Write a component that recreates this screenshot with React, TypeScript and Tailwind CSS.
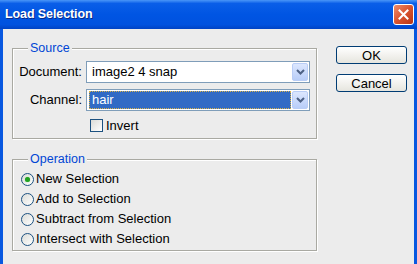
import React from 'react'

const font = { fontFamily: '"Liberation Sans", Arial, sans-serif' }

const Chevron = () => (
    <svg width="9" height="6" viewBox="0 0 9 6">
        <path d="M1 1 L4.5 4.5 L8 1" fill="none" stroke="#4d6185" strokeWidth="2" />
    </svg>
)

const DropButton = () => (
    <div className="w-[16px] h-[18px] rounded-[2px] border border-[#b9cdf6] bg-gradient-to-b from-[#dce7fe] to-[#b8cdf8] flex items-center justify-center">
        <Chevron />
    </div>
)

const Radio = ({ checked, label }: { checked?: boolean; label: string }) => (
    <div className="h-[20px] flex items-center">
        <div className="ml-[8px] w-[13px] h-[13px] rounded-full border border-[#1c5180] bg-gradient-to-br from-[#dcdcd7] to-white flex items-center justify-center">
            {checked && <div className="w-[5px] h-[5px] rounded-full bg-[#21a121] shadow-[0_0_1px_#6fd56f]" />}
        </div>
        <span className="ml-[2px] text-[13px] text-black">{label}</span>
    </div>
)

const groupBox = 'border border-[#a9a9a2] shadow-[1px_1px_0_#ffffff,inset_1px_1px_0_#ffffff] m-0 p-0 min-w-0'
const legend = 'ml-[15px] px-[2px] bg-[#ececec] text-[12.5px] leading-[14px] text-[#0046d5]'

export default function App() {
    return (
        <div className="w-[417px] h-[264px] bg-[#0858e0] flex flex-col overflow-hidden" style={font}>
            <div className="h-[29px] shrink-0 flex items-center justify-between pl-[5px] pr-[3px] bg-[linear-gradient(to_bottom,#4a96f8_0%,#0a5ee8_12%,#0055e3_50%,#0052df_85%,#0043c4_100%)]">
                <span className="text-white font-bold text-[12.5px] tracking-[-0.1px] [text-shadow:1px_1px_0_#0a2a88]">Load Selection</span>
                <div className="w-[21px] h-[21px] rounded-[3px] border border-white bg-gradient-to-br from-[#ee8c6a] via-[#d9532f] to-[#b83414] flex items-center justify-center">
                    <svg width="11" height="11" viewBox="0 0 11 11">
                        <path d="M1.5 1.5 L9.5 9.5 M9.5 1.5 L1.5 9.5" stroke="white" strokeWidth="2" strokeLinecap="square" />
                    </svg>
                </div>
            </div>

            <div className="flex-1 mx-[3px] bg-[#ececec] flex">
                <div className="w-[305px] ml-[9px] pt-[12px]">
                    <fieldset className={groupBox + ' h-[98px]'}>
                        <legend className={legend}>Source</legend>
                        <div className="mt-[6px] flex items-center h-[22px]">
                            <span className="w-[69px] text-right text-[13px] text-black">Document:</span>
                            <div className="ml-[4px] w-[224px] h-[22px] border border-[#7f9db9] bg-white flex items-center justify-between pl-[5px] pr-[1px]">
                                <span className="text-[13px] text-black">image2 4 snap</span>
                                <DropButton />
                            </div>
                        </div>
                        <div className="mt-[6px] flex items-center h-[22px]">
                            <span className="w-[69px] text-right text-[13px] text-black">Channel:</span>
                            <div className="ml-[4px] w-[224px] h-[22px] border border-[#7f9db9] bg-white flex items-center justify-between pl-[2px] pr-[1px]">
                                <div className="w-[202px] h-[18px] bg-[#316ac5] border border-dotted border-[#d8b24a] flex items-center pl-[2px]">
                                    <span className="text-[13px] text-white">hair</span>
                                </div>
                                <DropButton />
                            </div>
                        </div>
                        <div className="mt-[5px] ml-[77px] flex items-center">
                            <div className="w-[13px] h-[13px] border border-[#1c5180] bg-gradient-to-br from-[#dcdcd7] to-white" />
                            <span className="ml-[3px] text-[13px] text-black">Invert</span>
                        </div>
                    </fieldset>

                    <fieldset className={groupBox + ' mt-[13px] h-[99px]'}>
                        <legend className={legend}>Operation</legend>
                        <div className="mt-[3px]">
                            <Radio checked label="New Selection" />
                            <Radio label="Add to Selection" />
                            <Radio label="Subtract from Selection" />
                            <Radio label="Intersect with Selection" />
                        </div>
                    </fieldset>
                </div>

                <div className="ml-[19px] pt-[17px] flex flex-col gap-[10px]">
                    <button className="w-[71px] h-[18px] rounded-[3px] border border-[#003c74] bg-gradient-to-b from-white to-[#e6e5de] text-[13px] leading-none text-black flex items-center justify-center">
                        OK
                    </button>
                    <button className="w-[71px] h-[18px] rounded-[3px] border border-[#003c74] bg-gradient-to-b from-white to-[#e6e5de] text-[13px] leading-none text-black flex items-center justify-center">
                        Cancel
                    </button>
                </div>
            </div>
        </div>
    )
}
